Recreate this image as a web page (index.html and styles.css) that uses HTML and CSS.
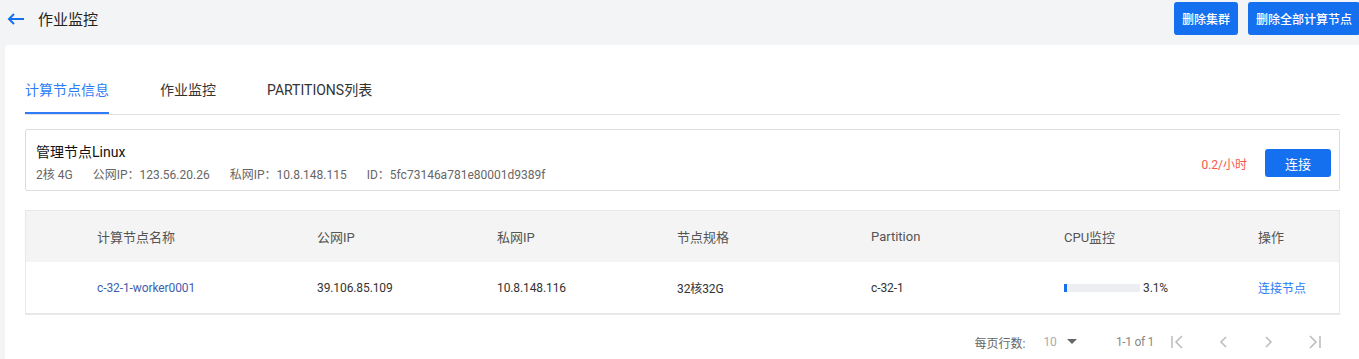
FILE: index.html
```html
<!DOCTYPE html>
<html lang="zh-CN">
<head>
    <meta charset="UTF-8">
    <meta name="viewport" content="width=device-width, initial-scale=1.0">
    <title>作业监控</title>
    <link rel="stylesheet" href="styles.css">
</head>
<body>
    <header class="top-bar">
        <div class="title-wrap">
            <svg class="back-icon" width="18" height="12" viewBox="0 0 18 12">
                <path d="M17 6H2M7 1L2 6l5 5" fill="none" stroke="#1570f0" stroke-width="2"/>
            </svg>
            <span class="page-title">作业监控</span>
        </div>
        <div class="top-actions">
            <button class="btn">删除集群</button>
            <button class="btn">删除全部计算节点</button>
        </div>
    </header>

    <main class="card">
        <nav class="tabs">
            <div class="tab active">计算节点信息</div>
            <div class="tab">作业监控</div>
            <div class="tab">PARTITIONS列表</div>
        </nav>

        <section class="master-box">
            <div class="master-info">
                <div class="master-name">管理节点Linux</div>
                <div class="master-meta">
                    <span>2核 4G</span>
                    <span>公网IP：123.56.20.26</span>
                    <span>私网IP：10.8.148.115</span>
                    <span>ID：5fc73146a781e80001d9389f</span>
                </div>
            </div>
            <div class="master-actions">
                <span class="price">0.2/小时</span>
                <button class="btn btn-connect">连接</button>
            </div>
        </section>

        <div class="node-table">
            <div class="tr th">
                <div>计算节点名称</div>
                <div>公网IP</div>
                <div>私网IP</div>
                <div>节点规格</div>
                <div>Partition</div>
                <div>CPU监控</div>
                <div>操作</div>
            </div>
            <div class="tr td">
                <div class="node-name">c-32-1-worker0001</div>
                <div>39.106.85.109</div>
                <div>10.8.148.116</div>
                <div>32核32G</div>
                <div>c-32-1</div>
                <div class="cpu">
                    <div class="cpu-bar"><div class="cpu-fill" style="width: 3.1%;"></div></div>
                    <span>3.1%</span>
                </div>
                <div class="op-link">连接节点</div>
            </div>
        </div>

        <div class="pager">
            <span class="pager-label">每页行数:</span>
            <span class="pager-size">10
                <svg width="10" height="6" viewBox="0 0 10 6"><path d="M0 0h10L5 5z" fill="#666"/></svg>
            </span>
            <span class="pager-range">1-1 of 1</span>
            <span class="pager-btn">
                <svg width="24" height="24" viewBox="0 0 24 24"><path d="M7 6v12M17 6l-6 6 6 6" fill="none" stroke="#bbb" stroke-width="1.5"/></svg>
            </span>
            <span class="pager-btn">
                <svg width="24" height="24" viewBox="0 0 24 24"><path d="M15 7l-5 5 5 5" fill="none" stroke="#bbb" stroke-width="1.5"/></svg>
            </span>
            <span class="pager-btn">
                <svg width="24" height="24" viewBox="0 0 24 24"><path d="M9 7l5 5-5 5" fill="none" stroke="#bbb" stroke-width="1.5"/></svg>
            </span>
            <span class="pager-btn">
                <svg width="24" height="24" viewBox="0 0 24 24"><path d="M17 6v12M7 6l6 6-6 6" fill="none" stroke="#bbb" stroke-width="1.5"/></svg>
            </span>
        </div>
    </main>
</body>
</html>
```

FILE: styles.css
```css
body {
    margin: 0;
    padding: 0;
    background-color: #f3f4f6;
    font-family: Roboto, "Noto Sans CJK SC", sans-serif;
    color: #222;
    overflow: hidden;
}
.top-bar {
    height: 45px;
    display: flex;
    justify-content: space-between;
    align-items: flex-start;
    padding: 2px 0 0 7px;
    box-sizing: border-box;
}
.title-wrap {
    display: flex;
    align-items: center;
    height: 33px;
}
.back-icon {
    margin-right: 13px;
}
.page-title {
    font-size: 15px;
    color: #222;
}
.top-actions {
    display: flex;
    gap: 10px;
    margin-right: -1px;
}
.btn {
    background-color: #1570f0;
    color: #fff;
    border: none;
    border-radius: 3px;
    font-family: inherit;
    font-size: 12px;
    font-weight: 500;
    height: 33px;
    padding: 0 8px;
    cursor: pointer;
}
.card {
    background-color: #fff;
    margin-left: 5px;
    border-radius: 4px 0 0 0;
    height: 314px;
    padding: 0 19px 0 20px;
    box-sizing: border-box;
}
.tabs {
    display: flex;
    padding-top: 21px;
    border-bottom: 1px solid #e2e2e2;
}
.tab {
    position: relative;
    height: 48px;
    line-height: 48px;
    font-size: 14px;
    color: #333;
    margin-right: 51px;
}
.tab.active {
    color: #2f7cf6;
}
.tab.active::after {
    content: "";
    position: absolute;
    left: 0;
    right: 0;
    bottom: 0;
    height: 2px;
    background-color: #2f7cf6;
}
.master-box {
    margin-top: 14px;
    border: 1px solid #dcdcdc;
    border-radius: 2px;
    padding: 12px 8px 6px 10px;
    display: flex;
    justify-content: space-between;
    align-items: center;
}
.master-name {
    font-size: 14px;
    line-height: 20px;
    margin-bottom: 4px;
    color: #111;
}
.master-meta {
    font-size: 12px;
    line-height: 18px;
    color: #666;
    display: flex;
    gap: 20px;
}
.master-actions {
    display: flex;
    align-items: center;
    gap: 18px;
}
.price {
    color: #f4584c;
    font-size: 12px;
}
.btn-connect {
    height: 28px;
    width: 66px;
    font-size: 13px;
    font-weight: 400;
}
.node-table {
    margin-top: 19px;
    border: 1px solid #e8e8e8;
    border-bottom-width: 2px;
}
.tr {
    display: grid;
    grid-template-columns: 220px 180px 180px 194px 193px 194px 1fr;
    padding-left: 71px;
    height: 51px;
    align-items: center;
}
.th {
    background-color: #f4f4f4;
    font-size: 13px;
    color: #555;
}
.td {
    font-size: 12px;
    color: #333;
    letter-spacing: -0.1px;
}
.node-name {
    color: #3f5eae;
}
.op-link {
    color: #2a7bf5;
    letter-spacing: 0;
}
.cpu {
    display: flex;
    align-items: center;
    gap: 3px;
}
.cpu-bar {
    width: 76px;
    height: 8px;
    background-color: #eceef1;
}
.cpu-fill {
    height: 100%;
    min-width: 3px;
    background-color: #1570f0;
}
.pager {
    height: 54px;
    display: flex;
    justify-content: flex-end;
    align-items: center;
    font-size: 12px;
    color: #666;
    padding-right: 13px;
}
.pager-size {
    margin-left: 18px;
    color: #aaa;
    display: flex;
    align-items: center;
    gap: 10px;
}
.pager-range {
    margin-left: 39px;
    margin-right: 11px;
    color: #888;
    letter-spacing: -0.3px;
}
.pager-btn {
    display: flex;
    width: 24px;
    height: 24px;
}
.pager-btn + .pager-btn {
    margin-left: 22px;
}
```
